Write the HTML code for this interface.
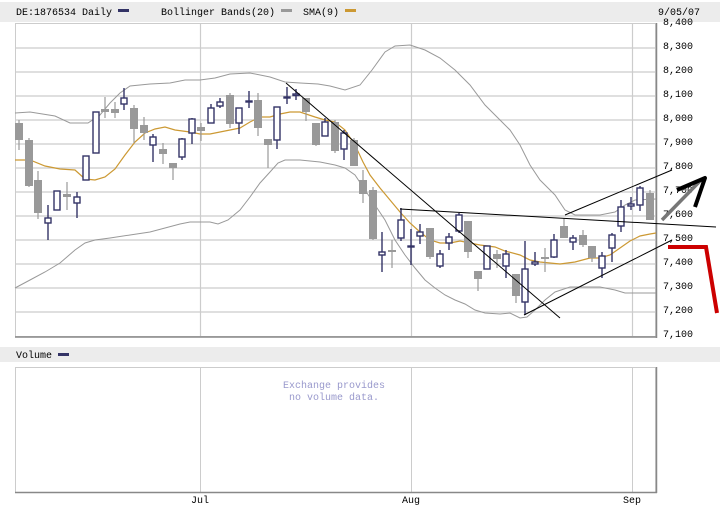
<!DOCTYPE html>
<html><head><meta charset="utf-8"><style>
html,body{margin:0;padding:0;background:#fff;}
svg{display:block;font-family:"Liberation Mono",monospace;}
</style></head><body>
<svg width="720" height="510" xmlns="http://www.w3.org/2000/svg">
<rect x="0" y="2" width="720" height="20" fill="#ececec"/>
<text x="16" y="15" font-size="10" fill="#000">DE:1876534 Daily</text>
<rect x="118" y="9" width="11" height="3" fill="#333366"/>
<text x="161" y="15" font-size="10" fill="#000">Bollinger Bands(20)</text>
<rect x="281" y="9" width="11" height="3" fill="#999"/>
<text x="303" y="15" font-size="10" fill="#000">SMA(9)</text>
<rect x="345" y="9" width="11" height="3" fill="#cc9933"/>
<text x="658" y="15" font-size="10" fill="#000">9/05/07</text>

<!-- main chart frame -->
<rect x="15.5" y="23.5" width="640" height="313" fill="#fff" stroke="#ccc"/>
<g stroke="#ccc" stroke-width="1.2">
<line x1="15" y1="48" x2="656" y2="48"/><line x1="15" y1="72" x2="656" y2="72"/>
<line x1="15" y1="96" x2="656" y2="96"/><line x1="15" y1="120" x2="656" y2="120"/>
<line x1="15" y1="144" x2="656" y2="144"/><line x1="15" y1="168" x2="656" y2="168"/>
<line x1="15" y1="192" x2="656" y2="192"/><line x1="15" y1="216" x2="656" y2="216"/>
<line x1="15" y1="240" x2="656" y2="240"/><line x1="15" y1="264" x2="656" y2="264"/>
<line x1="15" y1="288" x2="656" y2="288"/><line x1="15" y1="312" x2="656" y2="312"/>
<line x1="200.5" y1="23" x2="200.5" y2="337"/><line x1="411.5" y1="23" x2="411.5" y2="337"/><line x1="632.5" y1="23" x2="632.5" y2="337"/>
</g>
<line x1="15" y1="337" x2="657" y2="337" stroke="#888" stroke-width="1.5"/>
<line x1="656.5" y1="23" x2="656.5" y2="338" stroke="#888" stroke-width="1.5"/>
<g font-size="10" fill="#000">
<text x="663" y="25">8,400</text><text x="663" y="49">8,300</text><text x="663" y="73">8,200</text>
<text x="663" y="97">8,100</text><text x="663" y="121">8,000</text><text x="663" y="145">7,900</text>
<text x="663" y="169">7,800</text><text x="663" y="193">7,700</text><text x="663" y="217">7,600</text>
<text x="663" y="241">7,500</text><text x="663" y="265">7,400</text><text x="663" y="289">7,300</text>
<text x="663" y="313">7,200</text><text x="663" y="337">7,100</text>
</g>

<!-- bands -->
<polyline fill="none" stroke="#999" stroke-width="1" points="15,113 30,112 55,116 70,123 88,123 100,115 110,103 120,93 130,86 150,84 170,83 185,80 200,80 215,78 230,74 250,73 270,77 285,82 300,83 318,84 330,86 345,90 360,85 372,70 385,52 395,46 410,45 425,50 440,58 455,70 470,85 485,105 500,120 510,130 520,145 530,165 540,180 548,188 555,195 565,210 575,215 600,215 615,212 625,205 635,200 656,199"/>
<polyline fill="none" stroke="#999" stroke-width="1" points="15,288 30,280 45,272 60,263 75,250 85,243 95,240 110,238 130,235 150,232 165,228 180,224 190,222 200,222 210,222 218,224 228,220 240,210 250,197 260,183 270,172 278,163 285,160 300,160 320,162 335,165 345,168 355,175 365,190 375,205 385,220 395,240 405,255 415,268 425,280 435,288 445,295 455,300 465,304 475,310 485,313 500,314 510,313 520,318 527,317 535,310 545,300 555,292 570,287 600,287 615,290 625,293 640,293 656,293"/>
<!-- SMA -->
<polyline fill="none" stroke="#cc9933" stroke-width="1.2" points="15,160 30,160 45,166 60,169 75,170 85,179 95,180 105,177 115,169 125,155 135,142 145,133 155,129 165,127 175,130 190,132 200,134 210,134 225,131 240,128 250,122 260,117 270,117 280,114 290,112 300,112 315,117 325,120 335,122 345,130 355,145 363,162 370,175 380,188 390,200 400,212 410,223 420,232 430,240 440,243 450,243 460,241 470,243 480,245 495,247 505,251 520,255 530,260 540,262 550,263 560,264 575,262 590,258 600,258 610,255 620,248 630,241 640,236 650,234 656,233"/>

<!-- candles -->
<g stroke="#999" stroke-width="1.2">
<line x1="19" y1="120" x2="19" y2="150"/><line x1="29" y1="138" x2="29" y2="187"/><line x1="38" y1="171" x2="38" y2="219"/>
<line x1="67" y1="182" x2="67" y2="210"/><line x1="105" y1="97" x2="105" y2="118"/><line x1="115" y1="102" x2="115" y2="118"/>
<line x1="134" y1="105" x2="134" y2="143"/><line x1="144" y1="117" x2="144" y2="140"/><line x1="163" y1="143" x2="163" y2="164"/>
<line x1="173" y1="163" x2="173" y2="180"/><line x1="201" y1="123" x2="201" y2="141"/><line x1="230" y1="93" x2="230" y2="128"/>
<line x1="258" y1="93" x2="258" y2="136"/><line x1="268" y1="139" x2="268" y2="168"/><line x1="306" y1="98" x2="306" y2="121"/>
<line x1="316" y1="123" x2="316" y2="146"/><line x1="335" y1="120" x2="335" y2="153"/><line x1="354" y1="138" x2="354" y2="166"/>
<line x1="363" y1="170" x2="363" y2="203"/><line x1="373" y1="187" x2="373" y2="240"/><line x1="392" y1="240" x2="392" y2="268"/>
<line x1="430" y1="228" x2="430" y2="259"/><line x1="468" y1="221" x2="468" y2="258"/><line x1="478" y1="271" x2="478" y2="291"/>
<line x1="497" y1="250" x2="497" y2="268"/><line x1="516" y1="274" x2="516" y2="303"/><line x1="545" y1="248" x2="545" y2="272"/>
<line x1="564" y1="218" x2="564" y2="238"/><line x1="583" y1="230" x2="583" y2="247"/><line x1="592" y1="246" x2="592" y2="262"/>
<line x1="650" y1="190" x2="650" y2="220"/>
</g>
<g fill="#999">
<rect x="15" y="123" width="8" height="17"/><rect x="25" y="140" width="8" height="46"/><rect x="34" y="180" width="8" height="33"/>
<rect x="63" y="194" width="8" height="3"/><rect x="101" y="109" width="8" height="3"/><rect x="111" y="109" width="8" height="4"/>
<rect x="130" y="108" width="8" height="21"/><rect x="140" y="125" width="8" height="8"/><rect x="159" y="149" width="8" height="5"/>
<rect x="169" y="163" width="8" height="5"/><rect x="197" y="127" width="8" height="4"/><rect x="226" y="95" width="8" height="29"/>
<rect x="254" y="100" width="8" height="28"/><rect x="264" y="139" width="8" height="6"/><rect x="302" y="98" width="8" height="14"/>
<rect x="312" y="123" width="8" height="22"/><rect x="331" y="122" width="8" height="29"/><rect x="350" y="140" width="8" height="26"/>
<rect x="359" y="180" width="8" height="14"/><rect x="369" y="190" width="8" height="49"/><rect x="388" y="250" width="8" height="2"/>
<rect x="426" y="228" width="8" height="29"/><rect x="464" y="221" width="8" height="31"/><rect x="474" y="271" width="8" height="8"/>
<rect x="493" y="254" width="8" height="5"/><rect x="512" y="274" width="8" height="22"/><rect x="541" y="257" width="8" height="2"/>
<rect x="560" y="226" width="8" height="12"/><rect x="579" y="235" width="8" height="10"/><rect x="588" y="246" width="8" height="12"/>
<rect x="646" y="193" width="8" height="27"/>
</g>
<g stroke="#333366" stroke-width="1.4">
<line x1="48" y1="205" x2="48" y2="240"/><line x1="57" y1="191" x2="57" y2="210"/><line x1="77" y1="192" x2="77" y2="218"/>
<line x1="86" y1="156" x2="86" y2="180"/><line x1="96" y1="112" x2="96" y2="153"/><line x1="124" y1="88" x2="124" y2="110"/>
<line x1="153" y1="134" x2="153" y2="162"/><line x1="182" y1="138" x2="182" y2="160"/><line x1="192" y1="118" x2="192" y2="144"/>
<line x1="211" y1="104" x2="211" y2="123"/><line x1="220" y1="98" x2="220" y2="108"/><line x1="239" y1="108" x2="239" y2="134"/>
<line x1="249" y1="91" x2="249" y2="108"/><line x1="277" y1="107" x2="277" y2="149"/><line x1="287" y1="87" x2="287" y2="104"/>
<line x1="296" y1="89" x2="296" y2="100"/><line x1="325" y1="118" x2="325" y2="136"/><line x1="344" y1="130" x2="344" y2="160"/>
<line x1="382" y1="232" x2="382" y2="272"/><line x1="401" y1="208" x2="401" y2="241"/><line x1="411" y1="229" x2="411" y2="265"/>
<line x1="420" y1="224" x2="420" y2="244"/><line x1="440" y1="250" x2="440" y2="268"/><line x1="449" y1="233" x2="449" y2="250"/>
<line x1="459" y1="213" x2="459" y2="233"/><line x1="487" y1="246" x2="487" y2="269"/><line x1="506" y1="250" x2="506" y2="278"/>
<line x1="525" y1="241" x2="525" y2="315"/><line x1="535" y1="252" x2="535" y2="266"/><line x1="554" y1="234" x2="554" y2="258"/>
<line x1="573" y1="235" x2="573" y2="250"/><line x1="602" y1="252" x2="602" y2="278"/><line x1="612" y1="233" x2="612" y2="262"/>
<line x1="621" y1="200" x2="621" y2="232"/><line x1="631" y1="197" x2="631" y2="210"/><line x1="640" y1="186" x2="640" y2="211"/>
</g>
<g fill="#fff" stroke="#333366" stroke-width="1.4">
<rect x="45" y="218" width="6" height="5"/><rect x="54" y="191" width="6" height="19"/><rect x="74" y="197" width="6" height="6"/>
<rect x="83" y="156" width="6" height="24"/><rect x="93" y="112" width="6" height="41"/><rect x="121" y="98" width="6" height="6"/>
<rect x="150" y="137" width="6" height="8"/><rect x="179" y="139" width="6" height="18"/><rect x="189" y="119" width="6" height="14"/>
<rect x="208" y="108" width="6" height="15"/><rect x="217" y="102" width="6" height="4"/><rect x="236" y="108" width="6" height="15"/>
<rect x="246" y="101" width="6" height="1"/><rect x="274" y="107" width="6" height="33"/><rect x="284" y="97" width="6" height="1"/>
<rect x="293" y="94" width="6" height="1.5"/><rect x="322" y="122" width="6" height="14"/><rect x="341" y="133" width="6" height="16"/>
<rect x="379" y="252" width="6" height="3"/><rect x="398" y="220" width="6" height="18"/><rect x="408" y="246" width="6" height="1"/>
<rect x="417" y="232" width="6" height="4"/><rect x="437" y="254" width="6" height="12"/><rect x="446" y="237" width="6" height="6"/>
<rect x="456" y="215" width="6" height="16"/><rect x="484" y="246" width="6" height="23"/><rect x="503" y="254" width="6" height="12"/>
<rect x="522" y="269" width="6" height="33"/><rect x="532" y="262" width="6" height="2"/><rect x="551" y="240" width="6" height="17"/>
<rect x="570" y="238" width="6" height="4"/><rect x="599" y="256" width="6" height="12"/><rect x="609" y="235" width="6" height="13"/>
<rect x="618" y="207" width="6" height="19"/><rect x="628" y="204" width="6" height="2"/><rect x="637" y="188" width="6" height="17"/>
</g>

<!-- trend lines -->
<g stroke="#000" stroke-width="1" fill="none">
<line x1="286" y1="83" x2="560" y2="318"/>
<line x1="400" y1="209" x2="716" y2="227"/>
<line x1="524" y1="315" x2="672" y2="240"/>
<line x1="565" y1="215" x2="672" y2="170"/>
</g>
<line x1="662" y1="220" x2="702" y2="179" stroke="#777" stroke-width="3.5"/>
<polyline points="677,190 705,178 695,207" fill="none" stroke="#000" stroke-width="4" stroke-linejoin="round"/>
<polyline points="668,247 706,247 717,313" fill="none" stroke="#cc0000" stroke-width="4"/>

<text x="562" y="357" font-family="Liberation Sans,sans-serif" font-weight="bold" font-size="11" fill="#333366">©BigCharts.com</text>

<!-- volume -->
<rect x="0" y="347" width="720" height="15" fill="#ececec"/>
<text x="16" y="358" font-size="10" fill="#000">Volume</text>
<rect x="58" y="353" width="11" height="3" fill="#333366"/>
<rect x="15.5" y="367.5" width="640" height="125" fill="#fff" stroke="#ccc"/>
<line x1="200.5" y1="367" x2="200.5" y2="492" stroke="#ccc"/>
<line x1="411.5" y1="367" x2="411.5" y2="492" stroke="#ccc"/>
<line x1="632.5" y1="367" x2="632.5" y2="492" stroke="#ccc"/>
<line x1="15" y1="492.5" x2="657" y2="492.5" stroke="#888" stroke-width="1.5"/>
<line x1="656.5" y1="367" x2="656.5" y2="493" stroke="#888" stroke-width="1.5"/>
<text x="334" y="388" font-size="10" fill="#9999cc" text-anchor="middle">Exchange provides</text>
<text x="334" y="400" font-size="10" fill="#9999cc" text-anchor="middle">no volume data.</text>
<text x="200" y="503" font-size="10" fill="#000" text-anchor="middle">Jul</text>
<text x="411" y="503" font-size="10" fill="#000" text-anchor="middle">Aug</text>
<text x="632" y="503" font-size="10" fill="#000" text-anchor="middle">Sep</text>
</svg>
</body></html>
